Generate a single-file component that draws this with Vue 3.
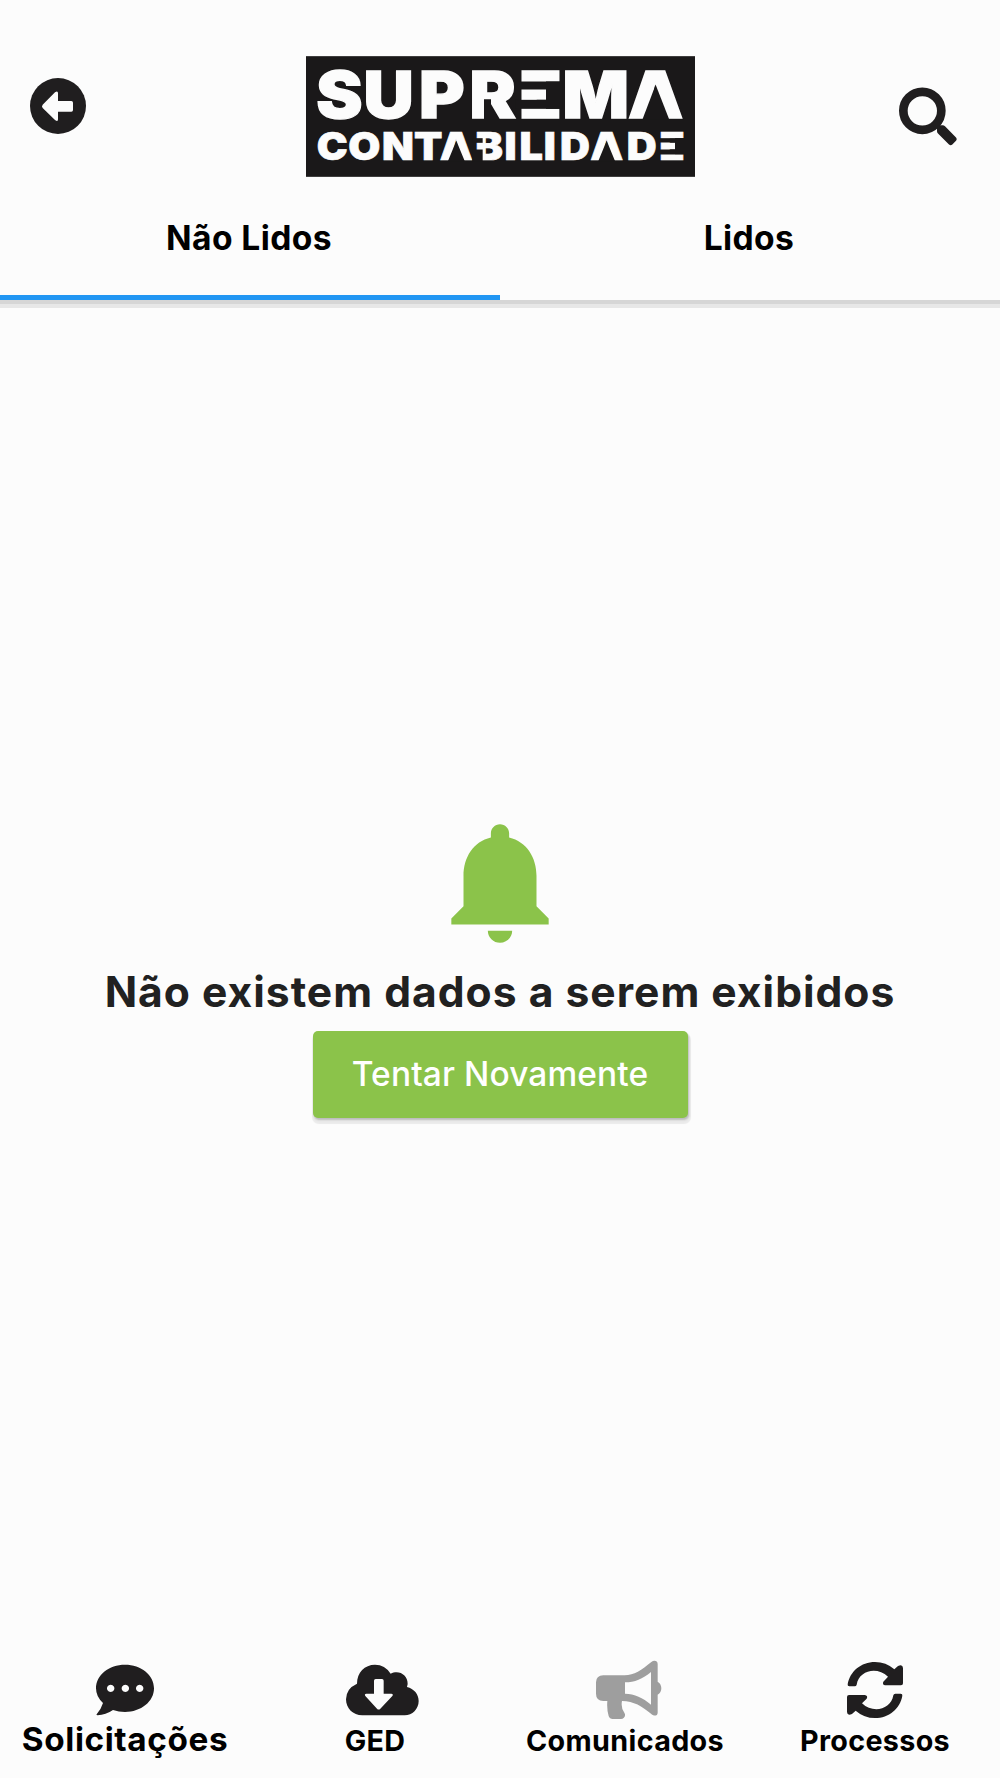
<template>
    <div class="screen">
        <header class="header">
            <div class="toolbar">
                <button class="icon-button" aria-label="Voltar">
                    <svg class="back-icon" viewBox="90 84 168 168">
                        <circle cx="174" cy="168" r="84" />
                        <path
                            class="hole"
                            d="M128 164L165 127Q174 121 174 130V153H214Q219 153 219 158V180Q219 185 214 185H174V208Q174 217 165 210L128 174Q124 169 128 164Z"
                        />
                    </svg>
                </button>
                <svg class="logo" viewBox="33 32 1167 362">
                    <rect class="logo-bg" x="33" y="32" width="1167" height="362" />
                    <g transform="scale(1.08 1)">
                        <text class="logo-top" x="123 260 408 549.5 681.5 835 1002" y="218">SUPREMA</text>
                        <text
                            class="logo-bottom"
                            x="103.7 192.6 286 370.4 448 539 599 656 708 778 865.7 963 1047"
                            y="345"
                        >CONTABILIDADE</text>
                    </g>
                    <!-- stencil cuts -->
                    <g class="logo-bg">
                        <rect x="662" y="108" width="138" height="24" />
                        <rect x="662" y="163" width="138" height="27" />
                        <rect x="753" y="108" width="50" height="82" />
                        <path d="M1082 118L1123 223H1042Z" />
                        <path d="M567 161H588V183L612 223H567Z" />
                        <path d="M484 286L510 349H458ZM935 286L961 349H909Z" />
                        <rect x="532" y="312" width="31" height="37" />
                        <rect x="532" y="278" width="31" height="14" />
                        <rect x="1086" y="278" width="84" height="13" />
                        <rect x="1086" y="312" width="84" height="15" />
                        <rect x="1140" y="278" width="30" height="48" />
                    </g>
                </svg>
                <button class="icon-button" aria-label="Pesquisar">
                    <svg class="search-icon" viewBox="116 80 174 176">
                        <circle cx="186" cy="151" r="57" fill="none" stroke="#201e1f" stroke-width="26" />
                        <path d="M230 212V201Q230 194 237 194H247Q251 194 254 197L287 231Q291 236 287 241L276 252Q271 257 266 252L233 219Q230 216 230 212Z" />
                    </svg>
                </button>
            </div>
            <nav class="tabs">
                <button
                    v-for="tab in tabs"
                    :key="tab"
                    class="tab"
                    :class="{ active: tab === activeTab }"
                    @click="activeTab = tab"
                >
                    <span>{{ tab }}</span>
                </button>
            </nav>
        </header>

        <main class="empty">
            <svg class="bell" viewBox="0 0 24 24">
                <path d="M12 22c1.1 0 2-.9 2-2h-4a2 2 0 0 0 2 2zm6-6v-5c0-3.07-1.64-5.64-4.5-6.32V4c0-.83-.67-1.5-1.5-1.5s-1.5.67-1.5 1.5v.68C7.63 5.36 6 7.92 6 11v5l-2 2v1h16v-1l-2-2z" />
            </svg>
            <p class="message">Não existem dados a serem exibidos</p>
            <button class="retry">Tentar Novamente</button>
        </main>

        <footer class="bottom-nav">
            <a
                v-for="item in items"
                :key="item.label"
                class="nav-item"
                :class="{ large: item.large, current: item.current }"
            >
                <svg class="nav-icon" viewBox="288 60 222 180">
                    <path fill-rule="evenodd" :d="item.icon" />
                </svg>
                <span class="nav-label">{{ item.label }}</span>
            </a>
        </footer>
    </div>
</template>

<script setup>
import { ref } from "vue";

const tabs = ["Não Lidos", "Lidos"];
const activeTab = ref("Não Lidos");

const items = [
    {
        label: "Solicitações",
        large: true,
        icon: "M375 74C423 74 462 105 462 145S423 216 375 216Q356 216 339 210Q317 225 293 226Q287 225 291 221Q303 208 309 189Q288 170 288 145C288 105 327 74 375 74ZM332 134a11 11 0 1 0 .1 0ZM376 134a11 11 0 1 0 .1 0ZM419 134a11 11 0 1 0 .1 0Z",
    },
    {
        label: "GED",
        icon: "M337 226C309 226 288 205 288 178Q288 146 321 131C321 97 344 74 375 74Q405 74 422 101C446 88 474 104 473 132Q472 137 471 141C492 146 506 163 506 183C506 207 487 226 464 226ZM377 117Q372 117 372 122V161H349Q342 162 346 168L381 206Q386 211 391 206L427 168Q431 162 424 161H401V122Q401 117 396 117Z",
    },
    {
        label: "Comunicados",
        current: true,
        icon: "M310 106H374C402 106 425 90 454 66C463 59 473 63 473 72V125Q484 132 484 145T473 164V218C473 228 461 229 454 222C425 198 402 184 366 183Q362 203 373 218C379 227 372 237 363 237H338Q329 237 326 228Q320 209 322 183H310Q288 182 288 161V127Q288 107 310 106ZM375 127V161C404 161 428 173 453 194V96C428 117 404 127 375 127Z",
    },
    {
        label: "Processos",
        icon: "M298 139Q292 139 293 133C300 94 333 66 375 66Q408 66 433 88L444 78Q458 71 459 84V130Q459 136 453 136H406Q396 134 400 125L414 110C381 78 327 91 320 134Q319 139 314 139ZM452 161Q458 161 457 167C450 206 417 234 375 234Q342 234 317 212L306 222Q292 229 291 216V171Q291 165 297 165H344Q355 167 350 176L336 190C369 222 423 209 430 166Q431 161 436 161Z",
    },
];
</script>

<style>
body {
    background: #fcfcfc;
}
</style>

<style scoped>
.screen {
    display: flex;
    flex-direction: column;
    height: 1778px;
    overflow: hidden;
    background: #fcfcfc;
    color: #000;
    font-family: Inter, "Liberation Sans", sans-serif;
}

button {
    padding: 0;
    border: 0;
    background: none;
    color: inherit;
    font: inherit;
}

svg {
    display: block;
    fill: #201e1f;
}

.header {
    flex: none;
    height: 300px;
    box-sizing: border-box;
    padding-top: 56px;
    box-shadow: 0 4px 0 #d6d6d6, 0 8px 0 #e7e7e7;
}

.toolbar {
    display: flex;
    justify-content: space-between;
    height: 121px;
    padding: 0 43px 0 30px;
}

.icon-button {
    display: flex;
    align-items: flex-start;
    width: 58px;
}

.back-icon {
    width: 56px;
    height: 56px;
    margin-top: 22px;
}

.hole {
    fill: #fcfcfc;
}

.search-icon {
    width: 58px;
    height: 59px;
    margin-top: 31px;
}

.logo {
    width: 389px;
    height: 121px;
    margin-left: 13px;
}

.logo-bg {
    fill: #1a1819;
}

.logo text {
    fill: #fcfcfc;
    stroke: #fcfcfc;
    stroke-width: 4px;
    font-weight: 900;
    text-anchor: middle;
}

.logo-top {
    font-size: 193px;
}

.logo .logo-bottom {
    font-size: 115px;
    stroke-width: 2px;
}

.tabs {
    display: flex;
    height: 123px;
}

.tab {
    flex: 1;
    display: flex;
    justify-content: center;
    box-sizing: border-box;
    padding: 41px 2px 0 0;
    border-bottom: 5px solid transparent;
    font-size: 33.6px;
    font-weight: 700;
    line-height: 40px;
    letter-spacing: 0.4px;
}

.tab.active {
    border-color: #2196f3;
}

.empty {
    flex: 1;
    display: flex;
    flex-direction: column;
    align-items: center;
    padding-top: 509px;
}

.bell {
    width: 146px;
    height: 146px;
    fill: #8bc34a;
}

.message {
    margin: 11px 0 14px;
    color: #212121;
    font-size: 42.6px;
    font-weight: 700;
    line-height: 51px;
    letter-spacing: 1px;
    white-space: nowrap;
}

.retry {
    width: 375px;
    height: 87px;
    padding-bottom: 2px;
    border-radius: 5px;
    background: #8bc34a;
    box-shadow: 1px 2px 2px rgba(0, 0, 0, 0.2), 1px 4px 1px 2px rgba(0, 0, 0, 0.07);
    color: #fff;
    font-size: 33.5px;
    font-weight: 500;
    letter-spacing: 0.1px;
}

.bottom-nav {
    display: grid;
    grid-template-columns: repeat(4, 1fr);
    height: 118px;
}

.nav-item {
    display: flex;
    flex-direction: column;
    align-items: center;
}

.nav-icon {
    width: 74px;
    height: 60px;
    margin-left: 16px;
}

.nav-label {
    margin-top: 4px;
    font-size: 28.7px;
    font-weight: 700;
    line-height: 34px;
    letter-spacing: 0.35px;
}

.large .nav-label {
    margin-top: -1px;
    font-size: 33.3px;
    line-height: 40px;
    letter-spacing: 0.6px;
}

.current .nav-icon {
    fill: #9e9e9e;
}
</style>
